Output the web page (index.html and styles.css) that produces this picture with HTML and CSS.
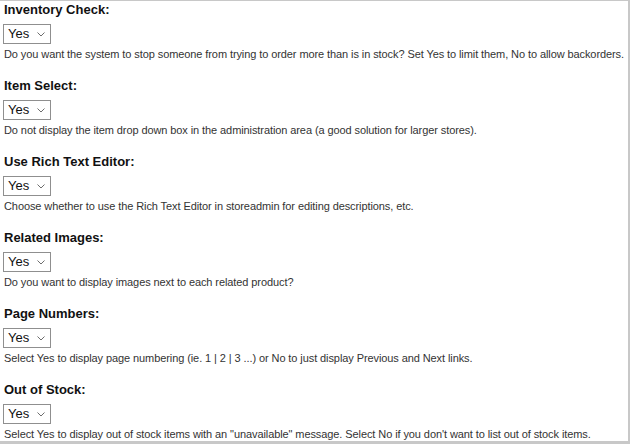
FILE: index.html
```html
<!DOCTYPE html>
<html>
<head>
<meta charset="utf-8">
<link rel="stylesheet" href="styles.css">
</head>
<body>
<div class="frame">
  <div class="setting">
    <h3 class="label">Inventory Check:</h3>
    <div class="select"><span class="value">Yes</span><svg class="chev" width="8" height="5" viewBox="0 0 8 5"><path d="M0.5 0.5 L4 4 L7.5 0.5" fill="none" stroke="#6d6d6d" stroke-width="1"/></svg></div>
    <p class="desc">Do you want the system to stop someone from trying to order more than is in stock? Set Yes to limit them, No to allow backorders.</p>
  </div>
  <div class="setting">
    <h3 class="label">Item Select:</h3>
    <div class="select"><span class="value">Yes</span><svg class="chev" width="8" height="5" viewBox="0 0 8 5"><path d="M0.5 0.5 L4 4 L7.5 0.5" fill="none" stroke="#6d6d6d" stroke-width="1"/></svg></div>
    <p class="desc">Do not display the item drop down box in the administration area (a good solution for larger stores).</p>
  </div>
  <div class="setting">
    <h3 class="label">Use Rich Text Editor:</h3>
    <div class="select"><span class="value">Yes</span><svg class="chev" width="8" height="5" viewBox="0 0 8 5"><path d="M0.5 0.5 L4 4 L7.5 0.5" fill="none" stroke="#6d6d6d" stroke-width="1"/></svg></div>
    <p class="desc">Choose whether to use the Rich Text Editor in storeadmin for editing descriptions, etc.</p>
  </div>
  <div class="setting">
    <h3 class="label">Related Images:</h3>
    <div class="select"><span class="value">Yes</span><svg class="chev" width="8" height="5" viewBox="0 0 8 5"><path d="M0.5 0.5 L4 4 L7.5 0.5" fill="none" stroke="#6d6d6d" stroke-width="1"/></svg></div>
    <p class="desc">Do you want to display images next to each related product?</p>
  </div>
  <div class="setting">
    <h3 class="label">Page Numbers:</h3>
    <div class="select"><span class="value">Yes</span><svg class="chev" width="8" height="5" viewBox="0 0 8 5"><path d="M0.5 0.5 L4 4 L7.5 0.5" fill="none" stroke="#6d6d6d" stroke-width="1"/></svg></div>
    <p class="desc">Select Yes to display page numbering (ie. 1 | 2 | 3 ...) or No to just display Previous and Next links.</p>
  </div>
  <div class="setting">
    <h3 class="label">Out of Stock:</h3>
    <div class="select"><span class="value">Yes</span><svg class="chev" width="8" height="5" viewBox="0 0 8 5"><path d="M0.5 0.5 L4 4 L7.5 0.5" fill="none" stroke="#6d6d6d" stroke-width="1"/></svg></div>
    <p class="desc">Select Yes to display out of stock items with an "unavailable" message. Select No if you don't want to list out of stock items.</p>
  </div>
</div>
</body>
</html>
```
FILE: styles.css
```css
html, body {
  margin: 0;
  padding: 0;
  background: #fff;
}
body {
  font-family: Arial, "Liberation Sans", sans-serif;
  color: #000;
}
.frame {
  width: 625px;
  height: 440px;
  border-top: 1px solid #c8c8c8;
  border-right: 2px solid #c8c8c8;
  border-bottom: 3px solid #c8c8c8;
  padding-left: 3px;
  overflow: hidden;
}
.setting {
  display: flex;
  flex-direction: column;
  align-items: flex-start;
  height: 76px;
}
.label {
  margin: 0;
  padding: 1px 0 0 1px;
  font-size: 13px;
  line-height: 15px;
  font-weight: bold;
  color: #111;
}
.select {
  margin-top: 7px;
  width: 48px;
  height: 20px;
  box-sizing: border-box;
  border: 1px solid #8f8f8f;
  display: flex;
  align-items: center;
  justify-content: space-between;
  padding: 0 5px 0 4px;
  background: #fff;
}
.value {
  font-size: 13px;
  line-height: 16px;
  color: #111;
}
.chev {
  display: block;
  margin-top: 1px;
}
.desc {
  margin: 4px 0 0;
  padding-left: 1px;
  font-size: 11px;
  line-height: 13px;
  letter-spacing: -0.09px;
  color: #333;
  white-space: nowrap;
}
```
